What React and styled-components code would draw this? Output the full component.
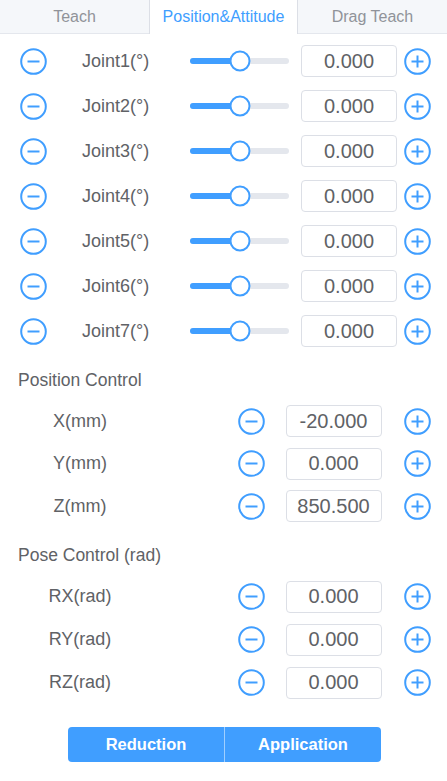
import React, { useState } from "react";
import styled, { createGlobalStyle } from "styled-components";

const GlobalStyle = createGlobalStyle`
    html, body {
        margin: 0;
        padding: 0;
        background: #fff;
        font-family: "Liberation Sans", Arial, sans-serif;
    }
    * {
        box-sizing: border-box;
    }
`;

const Page = styled.div`
    width: 447px;
    min-height: 781px;
    background: #fff;
`;

const TabBar = styled.div`
    display: flex;
    height: 34px;
    background: #f5f7fa;
    border-bottom: 1px solid #e4e7ed;
`;

const Tab = styled.div`
    flex: 1;
    display: flex;
    align-items: center;
    justify-content: center;
    height: 34px;
    font-size: 16px;
    color: ${(p) => (p.$active ? "#409eff" : "#909399")};
    background: ${(p) => (p.$active ? "#fff" : "transparent")};
    border-left: 1px solid ${(p) => (p.$active ? "#dcdfe6" : "transparent")};
    border-right: 1px solid ${(p) => (p.$active ? "#dcdfe6" : "transparent")};
    margin-bottom: ${(p) => (p.$active ? "-1px" : "0")};
`;

const JointList = styled.div`
    padding-top: 4.5px;
`;

const JointRow = styled.div`
    display: flex;
    align-items: center;
    height: 45px;
    padding-left: 19.5px;
`;

const JointLabel = styled.div`
    width: 108px;
    margin-left: 35.5px;
    font-size: 18px;
    color: #606266;
`;

const Slider = styled.div`
    position: relative;
    width: 99px;
    height: 6px;
    border-radius: 3px;
    background: #e4e7ed;
    margin-right: 12px;
`;

const SliderBar = styled.div`
    height: 6px;
    border-radius: 3px;
    background: #409eff;
`;

const SliderThumb = styled.div`
    position: absolute;
    top: 50%;
    width: 21px;
    height: 21px;
    border-radius: 50%;
    background: #fff;
    border: 2px solid #409eff;
    transform: translate(-50%, -50%);
`;

const ValueBox = styled.div`
    width: 96px;
    height: 32px;
    border: 1px solid #dcdfe6;
    border-radius: 4px;
    display: flex;
    align-items: center;
    justify-content: center;
    font-size: 20px;
    color: #606266;
`;

const IconButton = styled.button`
    width: 27px;
    height: 27px;
    padding: 0;
    border: none;
    background: none;
    cursor: pointer;
    display: flex;
    margin-left: ${(p) => p.$ml || 0}px;
    margin-right: ${(p) => p.$mr || 0}px;
`;

const Section = styled.div`
    margin-top: ${(p) => p.$mt}px;
`;

const SectionTitle = styled.div`
    height: 24px;
    line-height: 24px;
    padding-left: 18px;
    font-size: 17.5px;
    color: #606266;
    margin-bottom: 8px;
`;

const AxisRow = styled.div`
    display: flex;
    align-items: center;
    height: ${(p) => p.$h}px;
    padding-left: 20px;
`;

const AxisLabel = styled.div`
    width: 120px;
    text-align: center;
    font-size: 18px;
    color: #606266;
    margin-right: 98px;
`;

const ButtonGroup = styled.div`
    display: flex;
    margin: 22.5px 0 0 68px;
    width: 313px;
    height: 35px;
    border-radius: 4px;
    overflow: hidden;
`;

const ActionButton = styled.button`
    flex: 1;
    border: none;
    background: #409eff;
    color: #fff;
    font-family: "Liberation Sans", Arial, sans-serif;
    font-size: 16.5px;
    font-weight: bold;
    padding-top: 1px;
    cursor: pointer;
    & + & {
        border-left: 1px solid rgba(255, 255, 255, 0.5);
    }
`;

const MinusIcon = () => (
    <svg width="27" height="27" viewBox="0 0 27 27">
        <circle cx="13.5" cy="13.5" r="12.3" fill="none" stroke="#409eff" strokeWidth="2" />
        <line x1="7.5" y1="13.5" x2="19.5" y2="13.5" stroke="#409eff" strokeWidth="2" />
    </svg>
);

const PlusIcon = () => (
    <svg width="27" height="27" viewBox="0 0 27 27">
        <circle cx="13.5" cy="13.5" r="12.3" fill="none" stroke="#409eff" strokeWidth="2" />
        <line x1="7.5" y1="13.5" x2="19.5" y2="13.5" stroke="#409eff" strokeWidth="2" />
        <line x1="13.5" y1="7.5" x2="13.5" y2="19.5" stroke="#409eff" strokeWidth="2" />
    </svg>
);

const joints = [1, 2, 3, 4, 5, 6, 7];

const positions = [
    { label: "X(mm)", value: "-20.000" },
    { label: "Y(mm)", value: "0.000" },
    { label: "Z(mm)", value: "850.500" },
];

const poses = [
    { label: "RX(rad)", value: "0.000" },
    { label: "RY(rad)", value: "0.000" },
    { label: "RZ(rad)", value: "0.000" },
];

const App = () => {
    const [tab, setTab] = useState(1);
    const tabs = ["Teach", "Position&Attitude", "Drag Teach"];
    const percent = 50;

    return (
        <Page>
            <GlobalStyle />
            <TabBar>
                {tabs.map((t, i) => (
                    <Tab key={t} $active={tab === i} onClick={() => setTab(i)}>
                        {t}
                    </Tab>
                ))}
            </TabBar>

            <JointList>
                {joints.map((j) => (
                    <JointRow key={j}>
                        <IconButton>
                            <MinusIcon />
                        </IconButton>
                        <JointLabel>Joint{j}(°)</JointLabel>
                        <Slider>
                            <SliderBar style={{ width: `${percent}%` }} />
                            <SliderThumb style={{ left: `${percent}%` }} />
                        </Slider>
                        <ValueBox>0.000</ValueBox>
                        <IconButton $ml={7}>
                            <PlusIcon />
                        </IconButton>
                    </JointRow>
                ))}
            </JointList>

            <Section $mt={14.5}>
                <SectionTitle>Position Control</SectionTitle>
                {positions.map((p) => (
                    <AxisRow key={p.label} $h={42.6}>
                        <AxisLabel>{p.label}</AxisLabel>
                        <IconButton $mr={20.5}>
                            <MinusIcon />
                        </IconButton>
                        <ValueBox>{p.value}</ValueBox>
                        <IconButton $ml={22}>
                            <PlusIcon />
                        </IconButton>
                    </AxisRow>
                ))}
            </Section>

            <Section $mt={15.5}>
                <SectionTitle>Pose Control (rad)</SectionTitle>
                {poses.map((p) => (
                    <AxisRow key={p.label} $h={43}>
                        <AxisLabel>{p.label}</AxisLabel>
                        <IconButton $mr={20.5}>
                            <MinusIcon />
                        </IconButton>
                        <ValueBox>{p.value}</ValueBox>
                        <IconButton $ml={22}>
                            <PlusIcon />
                        </IconButton>
                    </AxisRow>
                ))}
            </Section>

            <ButtonGroup>
                <ActionButton>Reduction</ActionButton>
                <ActionButton>Application</ActionButton>
            </ButtonGroup>
        </Page>
    );
};

export default App;
